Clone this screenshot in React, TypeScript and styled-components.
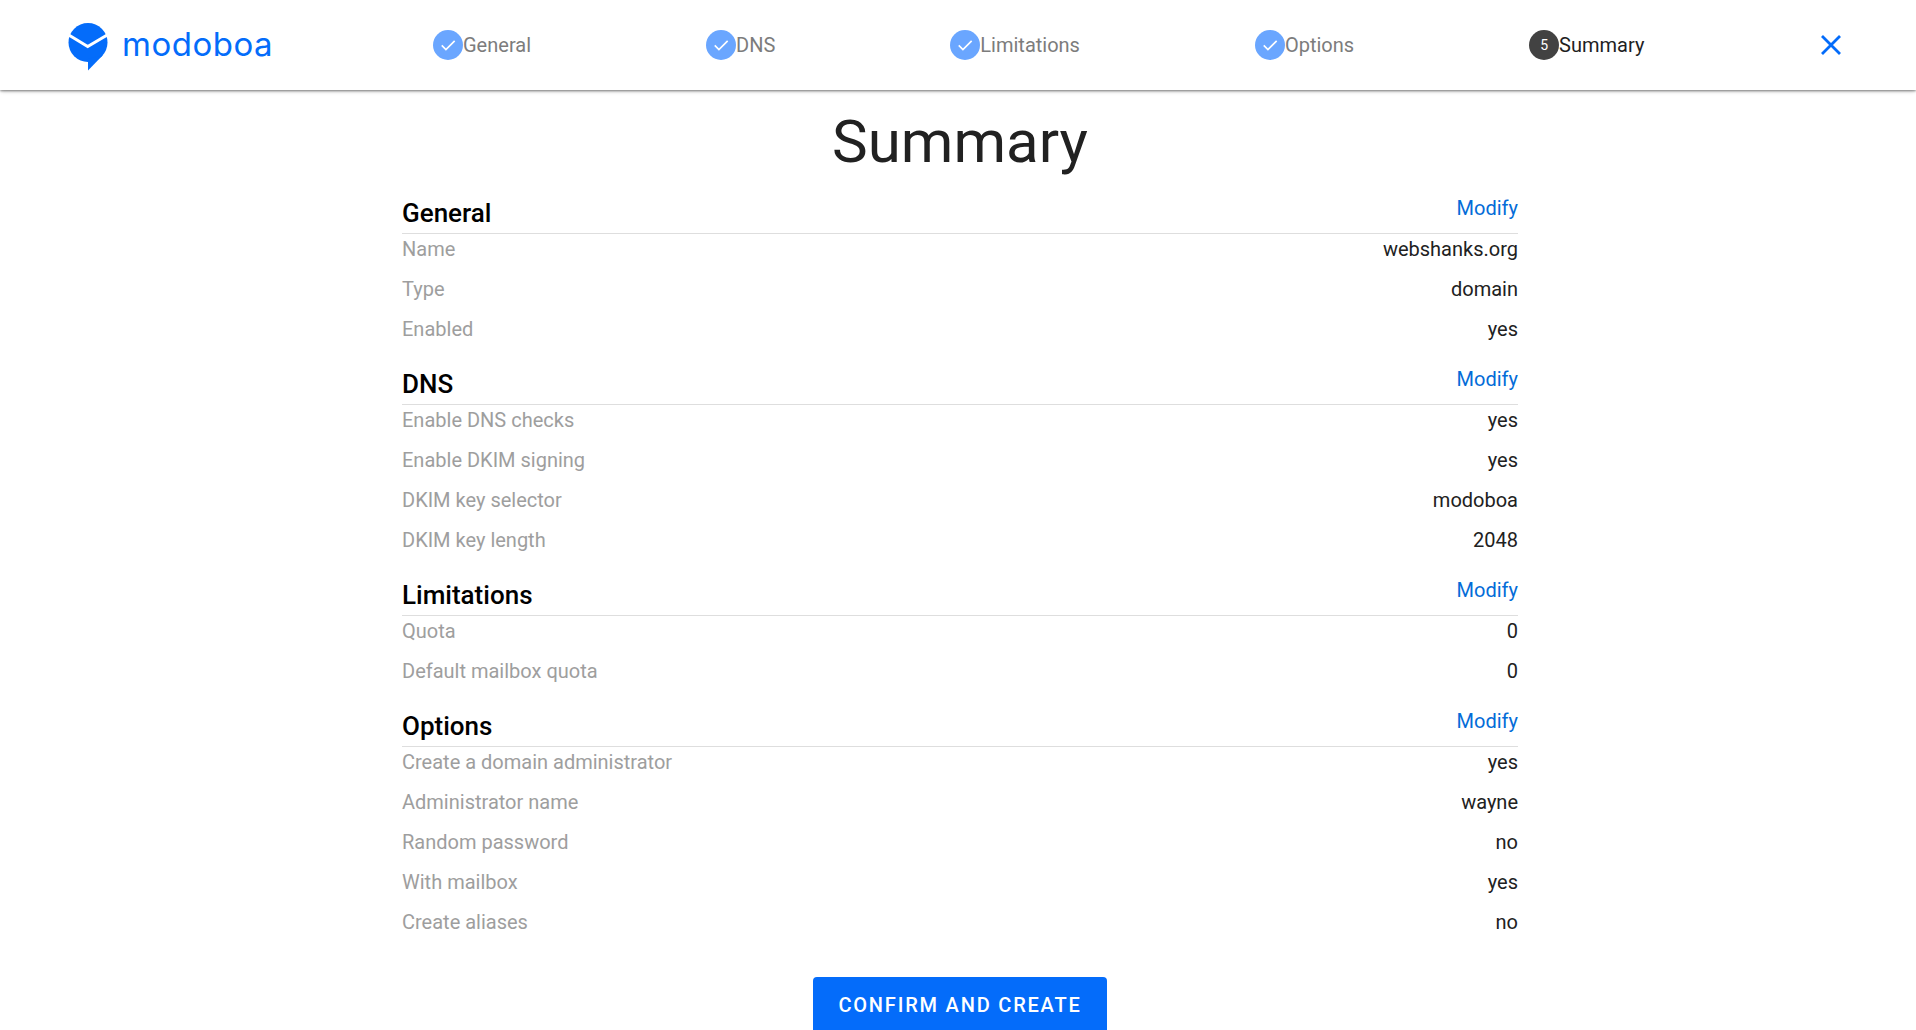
import React, { ReactElement } from 'react';
import styled, { createGlobalStyle } from 'styled-components';

type Row = [string, string];
type Section = { title: string; rows: Row[] };

const steps = ['General', 'DNS', 'Limitations', 'Options', 'Summary'];

const sections: Section[] = [
    { title: 'General', rows: [['Name', 'webshanks.org'], ['Type', 'domain'], ['Enabled', 'yes']] },
    { title: 'DNS', rows: [['Enable DNS checks', 'yes'], ['Enable DKIM signing', 'yes'], ['DKIM key selector', 'modoboa'], ['DKIM key length', '2048']] },
    { title: 'Limitations', rows: [['Quota', '0'], ['Default mailbox quota', '0']] },
    {
        title: 'Options',
        rows: [
            ['Create a domain administrator', 'yes'],
            ['Administrator name', 'wayne'],
            ['Random password', 'no'],
            ['With mailbox', 'yes'],
            ['Create aliases', 'no'],
        ],
    },
];

export default function App(): ReactElement {
    return (
        <>
            <GlobalStyle />
            <Header>
                <Logo>
                    <svg width="40" height="48" viewBox="0 0 40 48">
                        <circle cx="20" cy="19.5" r="19.5" fill="#046cfa" />
                        <polygon points="20,47.5 20,36 35,32" fill="#046cfa" />
                        <polyline points="0,11.5 19.7,23.5 40,11.5" fill="none" stroke="#fff" strokeWidth="3" />
                    </svg>
                    <LogoText>modoboa</LogoText>
                </Logo>
                <Stepper>
                    {steps.map((step, i) => {
                        const active = i === steps.length - 1;
                        return (
                            <Step key={step}>
                                <StepDot active={active}>
                                    {active ? (
                                        i + 1
                                    ) : (
                                        <svg width="20" height="20" viewBox="0 0 24 24">
                                            <path d="M4.5 12.5l5 5L20 7" fill="none" stroke="#fff" strokeWidth="2" />
                                        </svg>
                                    )}
                                </StepDot>
                                <StepLabel active={active}>{step}</StepLabel>
                            </Step>
                        );
                    })}
                </Stepper>
                <CloseButton aria-label="close">
                    <svg width="22" height="22" viewBox="0 0 22 22">
                        <path d="M2 2l18 18M20 2L2 20" fill="none" stroke="#046cfa" strokeWidth="2.8" />
                    </svg>
                </CloseButton>
            </Header>
            <Main>
                <Title>Summary</Title>
                {sections.map((section) => (
                    <SectionBlock key={section.title}>
                        <SectionHead>
                            <SectionTitle>{section.title}</SectionTitle>
                            <ModifyLink href="#">Modify</ModifyLink>
                        </SectionHead>
                        {section.rows.map(([label, value]) => (
                            <DataRow key={label}>
                                <Label>{label}</Label>
                                <Value>{value}</Value>
                            </DataRow>
                        ))}
                    </SectionBlock>
                ))}
                <ConfirmButton>CONFIRM AND CREATE</ConfirmButton>
            </Main>
        </>
    );
}

const GlobalStyle = createGlobalStyle`
    html, body {
        margin: 0;
        height: 100%;
        overflow: hidden;
        background: #fff;
        font-family: Roboto, "Liberation Sans", sans-serif;
    }
`;

const Header = styled.header`
    height: 90px;
    display: flex;
    align-items: center;
    padding: 0 68px;
    box-shadow: 0 2px 4px -1px rgba(0, 0, 0, 0.3), 0 1px 2px rgba(0, 0, 0, 0.35);
`;

const Logo = styled.div`
    display: flex;
    align-items: flex-start;
    gap: 14px;
    width: 365px;
    flex-shrink: 0;
    margin-top: 3px;
`;

const LogoText = styled.span`
    font-family: Inter, sans-serif;
    font-size: 33px;
    font-weight: 400;
    letter-spacing: 0.5px;
    line-height: 42px;
    color: #046cfa;
`;

const Stepper = styled.div`
    display: flex;
    align-items: center;
    gap: 175px;
`;

const Step = styled.div`
    display: flex;
    align-items: center;
`;

const StepDot = styled.span<{ active: boolean }>`
    width: 30px;
    height: 30px;
    border-radius: 50%;
    display: flex;
    align-items: center;
    justify-content: center;
    font-size: 14px;
    color: #fff;
    background: ${(props) => (props.active ? '#424242' : '#6aa6ff')};
`;

const StepLabel = styled.span<{ active: boolean }>`
    font-size: 20px;
    color: ${(props) => (props.active ? '#1f1f1f' : '#7c7c7c')};
`;

const CloseButton = styled.button`
    margin-left: auto;
    margin-right: 6px;
    padding: 0;
    border: none;
    background: none;
    display: flex;
`;

const Main = styled.main`
    width: 1116px;
    margin-left: 402px;
    display: flex;
    flex-direction: column;
`;

const Title = styled.h1`
    margin: 0;
    height: 104px;
    line-height: 103px;
    text-align: center;
    font-size: 60px;
    font-weight: 400;
    color: #212121;
`;

const SectionBlock = styled.section`
    margin-bottom: 11px;
`;

const SectionHead = styled.div`
    height: 40px;
    box-sizing: border-box;
    display: flex;
    align-items: center;
    justify-content: space-between;
    border-bottom: 1px solid #dedede;
`;

const SectionTitle = styled.h2`
    margin: 0 0 2px;
    font-size: 26px;
    font-weight: 500;
    color: #000;
`;

const ModifyLink = styled.a`
    font-size: 20px;
    color: #046cd8;
    text-decoration: none;
    margin-top: -12px;
`;

const DataRow = styled.div`
    height: 30px;
    margin-bottom: 10px;
    line-height: 30px;
    display: flex;
    justify-content: space-between;
    font-size: 20px;
`;

const Label = styled.span`
    color: #9e9e9e;
`;

const Value = styled.span`
    color: #212121;
`;

const ConfirmButton = styled.button`
    align-self: center;
    margin-top: 19px;
    width: 294px;
    height: 56px;
    flex-shrink: 0;
    border: none;
    border-radius: 4px;
    background: #046cfa;
    color: #fff;
    font-family: Roboto, sans-serif;
    font-size: 20px;
    font-weight: 500;
    letter-spacing: 1.8px;
`;
